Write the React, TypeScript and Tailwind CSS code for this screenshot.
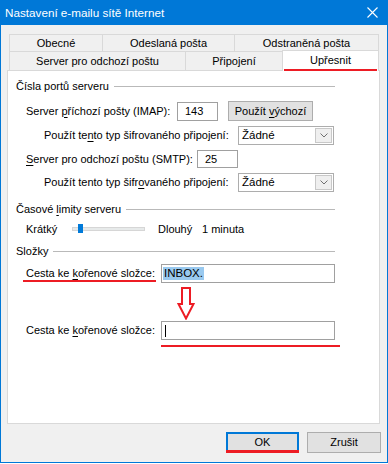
import React from 'react';

const font = { fontFamily: '"Liberation Sans", Arial, sans-serif' };

function Select() {
  return (
    <div className="shrink-0 w-[96px] h-[19px] border border-[#ADADAD] bg-white flex items-center justify-between">
      <span className="pl-[3px] leading-none text-[11.5px]">Žádné</span>
      <div className="w-[17px] h-[15px] mr-px border border-[#C8C8C8] bg-[#EFEFEF] flex items-center justify-center">
        <svg width="8" height="5" viewBox="0 0 8 5">
          <path d="M0.5 0.5 L4 4 L7.5 0.5" fill="none" stroke="#707070" strokeWidth="1" />
        </svg>
      </div>
    </div>
  );
}

function Heading({ children }: { children: React.ReactNode }) {
  return (
    <div className="h-[18px] flex items-center pl-[8px] w-[327px]">
      <span className="whitespace-nowrap shrink-0">{children}</span>
      <div className="grow ml-[5px] h-px bg-[#B9B9B9]" />
    </div>
  );
}

export default function App() {
  return (
    <div className="w-[388px] h-[464px] bg-white text-[11px] text-black whitespace-nowrap" style={font}>
      <div className="h-[463px] bg-[#0078D7] flex flex-col px-px pb-px">
        {/* title bar */}
        <div className="h-[25px] flex items-center justify-between pl-[4px] pr-[9px] text-white">
          <span className="text-[11.7px]">Nastavení e-mailu sítě Internet</span>
          <svg width="11" height="11" viewBox="0 0 11 11">
            <path d="M0.5 0.5 L10.5 10.5 M10.5 0.5 L0.5 10.5" stroke="white" strokeWidth="1.1" />
          </svg>
        </div>

        <div className="flex-1 bg-[#F0F0F0] flex flex-col">
          {/* tabs */}
          <div className="mt-[9px] ml-[8px] w-[370px] flex flex-col">
            <div className="h-[17px] flex">
              <div className="w-[93px] border-t border-l border-[#D9D9D9] flex items-center justify-center">Obecné</div>
              <div className="w-[132px] border-t border-l border-[#D9D9D9] flex items-center justify-center">Odeslaná pošta</div>
              <div className="w-[145px] border-t border-l border-r border-[#D9D9D9] flex items-center justify-center">Odstraněná pošta</div>
            </div>
            <div className="h-[19px] flex">
              <div className="w-[176px] border-t border-l border-[#D9D9D9] flex items-center justify-center">Server pro odchozí poštu</div>
              <div className="w-[97px] border-t border-l border-[#D9D9D9] flex items-center justify-center">Připojení</div>
              <div className="relative z-10 w-[97px] h-[21px] -mt-px border-t border-l border-r border-[#D9D9D9] bg-white flex items-center justify-center pb-[2px]">
                Upřesnit
                <div className="absolute left-[1px] right-[1px] bottom-0 h-[2px] bg-[#ED1C24]" />
              </div>
            </div>
          </div>

          {/* panel */}
          <div className="ml-[6px] w-[373px] h-[354px] border border-[#D9D9D9] bg-white flex flex-col pt-[6px]">
            <Heading>Čísla portů serveru</Heading>

            <div className="mt-[6px] h-[20px] flex items-center pl-[18px]">
              <span className="shrink-0 w-[151px]">
                Server <span className="underline underline-offset-2">p</span>říchozí pošty (IMAP):
              </span>
              <div className="shrink-0 w-[41px] h-[19px] border border-[#A0A0A0] bg-white flex items-center pl-[7px]">143</div>
              <div className="shrink-0 ml-[10px] w-[85px] h-[20px] border border-[#ADADAD] bg-[#E1E1E1] flex items-center justify-center">
                <span>
                  Použít <span className="underline underline-offset-2">v</span>ýchozí
                </span>
              </div>
            </div>

            <div className="mt-[5px] h-[19px] flex items-center pl-[36px]">
              <span className="shrink-0 w-[194px]">
                Použít te<span className="underline underline-offset-2">n</span>to typ šifrovaného připojení:
              </span>
              <Select />
            </div>

            <div className="mt-[5px] h-[18px] flex items-center pl-[18px]">
              <span className="shrink-0 w-[171px]">
                <span className="underline underline-offset-2">S</span>erver pro odchozí poštu (SMTP):
              </span>
              <div className="shrink-0 w-[41px] h-[18px] border border-[#A0A0A0] bg-white flex items-center pl-[7px]">25</div>
            </div>

            <div className="mt-[5px] h-[19px] flex items-center pl-[36px]">
              <span className="shrink-0 w-[194px]">
                Použít tento typ šifr<span className="underline underline-offset-2">o</span>vaného připojení:
              </span>
              <Select />
            </div>

            <div className="mt-[8px]">
              <Heading>
                Časové <span className="underline underline-offset-2">l</span>imity serveru
              </Heading>
            </div>

            <div className="mt-[3px] h-[16px] flex items-center pl-[18px]">
              <span className="shrink-0 w-[46px]">Krátký</span>
              <div className="shrink-0 relative w-[73px] h-[4px] border border-[#D6D6D6] bg-[#E7EAEA]">
                <div className="absolute left-[5px] -top-[4px] w-[5px] h-[9px] bg-[#007AD9]" />
              </div>
              <span className="shrink-0 ml-[13px] w-[44px]">Dlouhý</span>
              <span>1 minuta</span>
            </div>

            <div className="mt-[5px]">
              <Heading>Složky</Heading>
            </div>

            <div className="mt-[4px] h-[19px] flex items-center pl-[18px]">
              <span className="shrink-0 relative w-[135px]">
                Cesta ke <span className="underline underline-offset-2">k</span>ořenové složce:
                <div className="absolute -left-[3px] w-[133px] top-[15px] h-[2px] bg-[#ED1C24]" />
              </span>
              <div className="shrink-0 w-[174px] h-[19px] border border-[#A0A0A0] bg-white flex items-center pl-[1px]">
                <span className="bg-[#99C9EF] px-px leading-[13px] text-[11.5px]">INBOX.</span>
              </div>
            </div>

            <div className="mt-[4px] h-[33px] pl-[169px]">
              <svg width="18" height="33" viewBox="0 0 18 33">
                <polygon points="5,1 13,1 13,17 16.5,17 9,31.5 1.5,17 5,17" fill="none" stroke="#ED1C24" strokeWidth="2" />
              </svg>
            </div>

            <div className="mt-[1px] h-[19px] flex items-center pl-[18px]">
              <span className="shrink-0 w-[135px]">
                Cesta ke <span className="underline underline-offset-2">k</span>ořenové složce:
              </span>
              <div className="shrink-0 relative w-[174px] h-[19px] border border-[#A0A0A0] bg-white flex items-center pl-[3px]">
                <div className="w-px h-[12px] bg-black" />
                <div className="absolute -left-px w-[179px] top-[23px] h-[2px] bg-[#ED1C24]" />
              </div>
            </div>
          </div>

          {/* buttons */}
          <div className="mt-[8px] flex pl-[225px]">
            <div className="relative w-[73px] h-[21px] border-2 border-[#0078D7] bg-[#E1E1E1] flex items-center justify-center">
              OK
              <div className="absolute -left-[2px] -right-[2px] -bottom-[2px] h-[3px] bg-[#ED1C24]" />
            </div>
            <div className="ml-[8px] w-[74px] h-[21px] border border-[#ADADAD] bg-[#E1E1E1] flex items-center justify-center">Zrušit</div>
          </div>
        </div>
      </div>
    </div>
  );
}
